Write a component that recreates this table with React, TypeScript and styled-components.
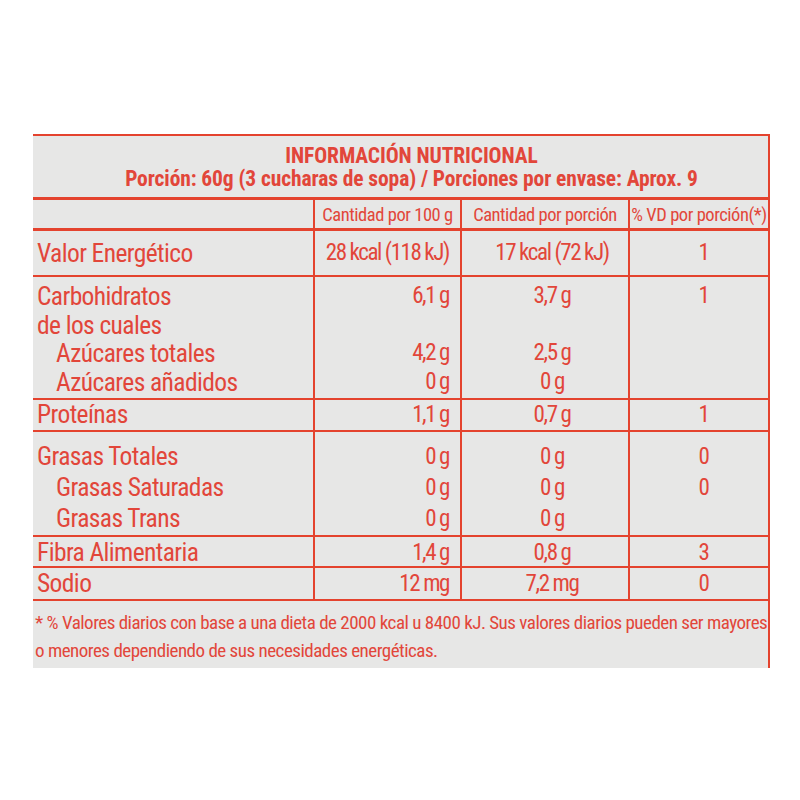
import React from "react";
import styled, { createGlobalStyle } from "styled-components";

const RED = "#e2463a";
const LINE = "#e4432e";

const Global = createGlobalStyle`
  html, body { margin: 0; padding: 0; background: #ffffff; }
  body { width: 800px; height: 800px; overflow: hidden; }
`;

const FONT = `"Roboto Condensed", "Roboto", "Liberation Sans", sans-serif`;

const Page = styled.div`
  width: 800px;
  height: 800px;
  padding-top: 134px;
  box-sizing: border-box;
  font-family: ${FONT};
  color: ${RED};
`;

const Label = styled.section`
  margin-left: 33px;
  width: 737px;
  background: #e7e7e6;
  border-top: 2px solid ${LINE};
  border-right: 2px solid ${LINE};
  box-sizing: border-box;
`;

const Heading = styled.header`
  padding: 8px 0 7px;
  text-align: center;
  font-weight: 700;
  line-height: 23px;
  font-size: 21.5px;
  letter-spacing: -0.1px;
`;

const Title = styled.div`
  padding-left: 22px;
`;

const Serving = styled.div`
  padding-left: 22px;
`;

const Row = styled.div<{ $h: number; $pad: number; $thick?: boolean }>`
  display: grid;
  grid-template-columns: 280px 147px 168px 140px;
  height: ${(p) => p.$h}px;
  border-top: ${(p) => (p.$thick ? 3 : 2)}px solid ${LINE};
  box-sizing: border-box;
  & > div {
    padding-top: ${(p) => p.$pad}px;
  }
`;

type Kind = "head" | "name" | "qty" | "portion" | "vd";

const Cell = styled.div<{ $kind: Kind; $lh: number }>`
  box-sizing: border-box;
  border-left: ${(p) => (p.$kind === "name" ? "none" : `2px solid ${LINE}`)};
  text-align: ${(p) => (p.$kind === "name" ? "left" : p.$kind === "qty" ? "right" : "center")};
  padding-left: ${(p) =>
    p.$kind === "name" ? 4 : p.$kind === "portion" ? 14 : p.$kind === "vd" ? 9 : 0}px;
  padding-right: ${(p) => (p.$kind === "qty" ? 11 : 0)}px;
  font-size: ${(p) => (p.$kind === "head" ? 18.5 : p.$kind === "name" ? 25.5 : 23)}px;
  letter-spacing: ${(p) => (p.$kind === "head" ? -0.45 : p.$kind === "name" ? -0.6 : -1.4)}px;
  line-height: ${(p) => p.$lh}px;
  white-space: nowrap;
`;

const HeadCell = styled(Cell)`
  padding-left: 0;
`;

const Line = styled.div<{ $indent?: boolean }>`
  padding-left: ${(p) => (p.$indent ? 19 : 0)}px;
`;

const Footer = styled.footer`
  border-top: 2px solid ${LINE};
  padding: 8px 0 3px 2px;
  font-size: 19px;
  line-height: 28px;
  letter-spacing: -0.5px;
  white-space: nowrap;
`;

type RowData = {
  h: number;
  pad: number;
  lh: number;
  label: { t: string; indent?: boolean }[];
  a: string[];
  b: string[];
  c: string[];
};

const rows: RowData[] = [
  { h: 47, pad: 7, lh: 30, label: [{ t: "Valor Energético" }], a: ["28 kcal (118 kJ)"], b: ["17 kcal (72 kJ)"], c: ["1"] },
  {
    h: 123,
    pad: 5,
    lh: 28.5,
    label: [
      { t: "Carbohidratos" },
      { t: "de los cuales" },
      { t: "Azúcares totales", indent: true },
      { t: "Azúcares añadidos", indent: true },
    ],
    a: ["6,1 g", "", "4,2 g", "0 g"],
    b: ["3,7 g", "", "2,5 g", "0 g"],
    c: ["1", "", "", ""],
  },
  { h: 32, pad: 0, lh: 29, label: [{ t: "Proteínas" }], a: ["1,1 g"], b: ["0,7 g"], c: ["1"] },
  {
    h: 105,
    pad: 9,
    lh: 31,
    label: [{ t: "Grasas Totales" }, { t: "Grasas Saturadas", indent: true }, { t: "Grasas Trans", indent: true }],
    a: ["0 g", "0 g", "0 g"],
    b: ["0 g", "0 g", "0 g"],
    c: ["0", "0", ""],
  },
  { h: 31, pad: 1, lh: 29, label: [{ t: "Fibra Alimentaria" }], a: ["1,4 g"], b: ["0,8 g"], c: ["3"] },
  { h: 33, pad: 1, lh: 29, label: [{ t: "Sodio" }], a: ["12 mg"], b: ["7,2 mg"], c: ["0"] },
];

const Lines: React.FC<{ items: { t: string; indent?: boolean }[] }> = ({ items }) => (
  <>
    {items.map((it, i) => (
      <Line key={i} $indent={it.indent}>
        {it.t || "\u00a0"}
      </Line>
    ))}
  </>
);

const wrap = (xs: string[]) => xs.map((t) => ({ t }));

export default function App() {
  return (
    <>
      <Global />
      <Page>
        <Label>
          <Heading>
            <Title>INFORMACIÓN NUTRICIONAL</Title>
            <Serving>Porción: 60g (3 cucharas de sopa) / Porciones por envase: Aprox. 9</Serving>
          </Heading>
          <Row $h={31} $pad={2} $thick>
            <Cell $kind="name" $lh={26} />
            <HeadCell $kind="head" $lh={26}>Cantidad por 100 g</HeadCell>
            <HeadCell $kind="head" $lh={26}>Cantidad por porción</HeadCell>
            <HeadCell $kind="head" $lh={26}>% VD por porción(*)</HeadCell>
          </Row>
          {rows.map((r, i) => (
            <Row key={i} $h={r.h} $pad={r.pad} $thick={i === 0}>
              <Cell $kind="name" $lh={r.lh}>
                <Lines items={r.label} />
              </Cell>
              <Cell $kind="qty" $lh={r.lh}>
                <Lines items={wrap(r.a)} />
              </Cell>
              <Cell $kind="portion" $lh={r.lh}>
                <Lines items={wrap(r.b)} />
              </Cell>
              <Cell $kind="vd" $lh={r.lh}>
                <Lines items={wrap(r.c)} />
              </Cell>
            </Row>
          ))}
          <Footer>
            * % Valores diarios con base a una dieta de 2000 kcal u 8400 kJ. Sus valores diarios pueden ser mayores
            <br />o menores dependiendo de sus necesidades energéticas.
          </Footer>
        </Label>
      </Page>
    </>
  );
}
